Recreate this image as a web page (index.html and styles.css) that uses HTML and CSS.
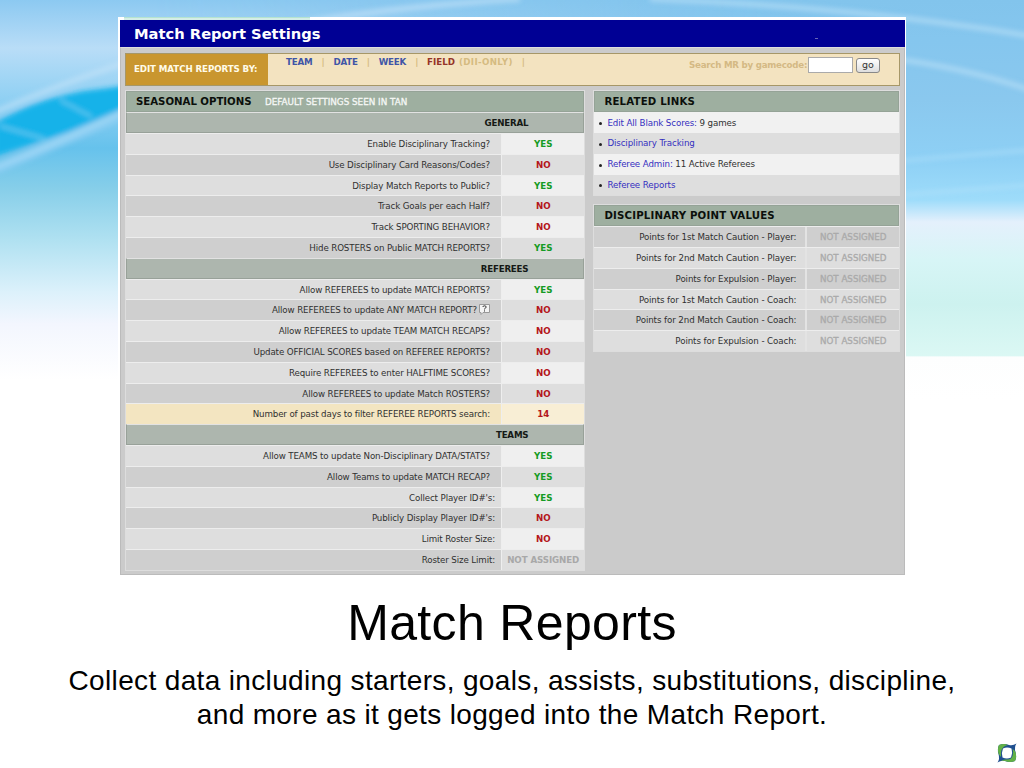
FILE: index.html
```html
<!DOCTYPE html>
<html lang="en">
<head>
<meta charset="utf-8">
<title>Match Reports</title>
<link rel="stylesheet" href="styles.css">
</head>
<body>
<main class="slide">
  <svg class="backdrop" viewBox="0 0 1024 400" preserveAspectRatio="none" aria-hidden="true">
    <defs>
      <linearGradient id="left" x1="0" y1="0" x2="0" y2="1">
        <stop offset="0" stop-color="#8cc9f1"/><stop offset=".12" stop-color="#b9ddf7"/><stop offset=".25" stop-color="#8fd0f3"/><stop offset=".37" stop-color="#66c2ec"/><stop offset=".47" stop-color="#86cee9"/><stop offset=".6" stop-color="#b0e1f1"/><stop offset=".73" stop-color="#dcf1fb"/><stop offset=".81" stop-color="#f3f6fe"/><stop offset=".95" stop-color="#fff"/>
      </linearGradient>
      <linearGradient id="right" x1="0" y1="0" x2="0" y2="1">
        <stop offset="0" stop-color="#82c4ec"/><stop offset=".1" stop-color="#85c6ee"/><stop offset=".25" stop-color="#8ac8ee"/><stop offset=".4" stop-color="#8ed0f5"/><stop offset=".5" stop-color="#9edcfa"/><stop offset=".555" stop-color="#e4f0fc"/><stop offset=".65" stop-color="#d7f5f6"/><stop offset=".76" stop-color="#cdf2ef"/><stop offset=".89" stop-color="#dbf8f4"/><stop offset=".892" stop-color="#fdfefe"/><stop offset="1" stop-color="#fff"/>
      </linearGradient>
      <linearGradient id="fade"><stop offset=".15" stop-color="#000"/><stop offset=".75" stop-color="#fff"/></linearGradient>
      <mask id="blend"><rect width="1024" height="400" fill="url(#fade)"/></mask>
      <filter id="soft"><feGaussianBlur stdDeviation="2.6"/></filter>
    </defs>
    <rect width="1024" height="400" fill="url(#left)"/>
    <rect width="1024" height="400" fill="url(#right)" mask="url(#blend)"/>
    <g filter="url(#soft)" fill="none">
      <path d="M-5 124C20 108 45 100 62 96C90 88 110 90 130 84V112L-5 156Z" fill="#16b2e9"/>
      <path d="M0 126L45 139M60 100L92 117" stroke="#5cc6ef" stroke-width="3"/>
      <path d="M-5 169Q60 142 130 111" stroke="#8acdf2" stroke-width="11"/>
      <path d="M-5 168Q60 142 130 109" stroke="#a8dbf6" stroke-width="2"/>
      <path d="M-5 112Q60 84 130 61Q300 12 520 -1" stroke="#c4e3f9" stroke-width="6" opacity=".6"/>
      <path d="M650 -1Q860 7 1030 36M880 57Q960 66 1030 90" stroke="#c0e2f8" stroke-width="5" opacity=".6"/>
      <path d="M900 161L1030 150M900 195L1030 185" stroke="#b8e5fb" stroke-width="3" opacity=".6"/>
    </g>
  </svg>

  <section class="shot">
    <div class="tabline"></div>
    <header class="titlebar"><span>Match Report Settings</span><i></i></header>
    <div class="work">
      <nav class="filter">
        <strong class="filter-name"><span>EDIT MATCH REPORTS BY:</span></strong>
        <div class="filter-links"><a>TEAM</a><b>|</b><a>DATE</a><b>|</b><a>WEEK</a><b>|</b><a class="current">FIELD</a><em>(DII-ONLY)</em><b>|</b></div>
        <div class="search"><label>Search MR by gamecode:</label><span class="field"></span><span class="go">go</span></div>
      </nav>
      <div class="columns">
        <section class="panel options">
          <h2><span class="h">SEASONAL OPTIONS</span><small>DEFAULT SETTINGS SEEN IN TAN</small></h2>
          <h3>GENERAL</h3>
          <div class="row"><span>Enable Disciplinary Tracking?</span><b class="yes">YES</b></div>
          <div class="row alt"><span>Use Disciplinary Card Reasons/Codes?</span><b class="no">NO</b></div>
          <div class="row"><span>Display Match Reports to Public?</span><b class="yes">YES</b></div>
          <div class="row alt"><span>Track Goals per each Half?</span><b class="no">NO</b></div>
          <div class="row"><span>Track SPORTING BEHAVIOR?</span><b class="no">NO</b></div>
          <div class="row alt"><span>Hide ROSTERS on Public MATCH REPORTS?</span><b class="yes">YES</b></div>
          <h3>REFEREES</h3>
          <div class="row"><span>Allow REFEREES to update MATCH REPORTS?</span><b class="yes">YES</b></div>
          <div class="row alt"><span>Allow REFEREES to update ANY MATCH REPORT?<svg class="help" viewBox="0 0 11 11"><path d="M1 .5H10.5V8.5H4L2 10.5V8.5H.5V.5Z" fill="#f4f4f4" stroke="#999"/><path d="M3.8 3Q4 1.8 5.5 1.8Q7.2 1.8 7.2 3.1Q7.2 3.8 5.5 4.8V5.4M5.5 6.4V7.5" fill="none" stroke="#333"/></svg></span><b class="no">NO</b></div>
          <div class="row"><span>Allow REFEREES to update TEAM MATCH RECAPS?</span><b class="no">NO</b></div>
          <div class="row alt"><span>Update OFFICIAL SCORES based on REFEREE REPORTS?</span><b class="no">NO</b></div>
          <div class="row"><span>Require REFEREES to enter HALFTIME SCORES?</span><b class="no">NO</b></div>
          <div class="row alt"><span>Allow REFEREES to update Match ROSTERS?</span><b class="no">NO</b></div>
          <div class="row tan"><span>Number of past days to filter REFEREE REPORTS search:</span><b class="no">14</b></div>
          <h3>TEAMS</h3>
          <div class="row"><span>Allow TEAMS to update Non-Disciplinary DATA/STATS?</span><b class="yes">YES</b></div>
          <div class="row alt"><span>Allow Teams to update MATCH RECAP?</span><b class="yes">YES</b></div>
          <div class="row wide"><span>Collect Player ID#'s:</span><b class="yes">YES</b></div>
          <div class="row alt wide"><span>Publicly Display Player ID#'s:</span><b class="no">NO</b></div>
          <div class="row wide"><span>Limit Roster Size:</span><b class="no">NO</b></div>
          <div class="row alt wide"><span>Roster Size Limit:</span><b class="unset">NOT ASSIGNED</b></div>
        </section>
        <aside class="side">
          <section class="panel links">
            <h2><span class="h">RELATED LINKS</span></h2>
            <p><i></i><span><a>Edit All Blank Scores:</a> 9 games</span></p>
            <p class="alt"><i></i><a>Disciplinary Tracking</a></p>
            <p><i></i><span><a>Referee Admin:</a> 11 Active Referees</span></p>
            <p class="alt"><i></i><a>Referee Reports</a></p>
          </section>
          <section class="panel points">
            <h2><span class="h">DISCIPLINARY POINT VALUES</span></h2>
            <div class="row alt"><span>Points for 1st Match Caution - Player:</span><b>NOT ASSIGNED</b></div>
            <div class="row"><span>Points for 2nd Match Caution - Player:</span><b>NOT ASSIGNED</b></div>
            <div class="row alt"><span>Points for Expulsion - Player:</span><b>NOT ASSIGNED</b></div>
            <div class="row"><span>Points for 1st Match Caution - Coach:</span><b>NOT ASSIGNED</b></div>
            <div class="row alt"><span>Points for 2nd Match Caution - Coach:</span><b>NOT ASSIGNED</b></div>
            <div class="row"><span>Points for Expulsion - Coach:</span><b>NOT ASSIGNED</b></div>
          </section>
        </aside>
      </div>
    </div>
  </section>

  <h1>Match Reports</h1>
  <p class="caption"><span>Collect data including starters, goals, assists, substitutions, discipline,</span><span>and more as it gets logged into the Match Report.</span></p>
  <svg class="logo" viewBox="0 0 20 20" aria-label="Logo">
    <path d="M2 2Q7 0 12 2Q16 3 19.5 .5Q17 4 18.5 9Q20 14 18 18Q13 20 8 18Q4 17 .5 19.5Q3 16 1.5 11Q0 6 2 2Z" fill="#1f4f8f"/>
    <path d="M2 2Q7 0 11 2Q6 3 4.5 7Q3.5 10 4 14Q3 13 1.7 11Q0 6 2 2Z" fill="#62b146"/>
    <path d="M18 18Q13 20 8 18Q5 17 3 18Q6 16 10 16.5Q14 17 15.5 13Q17 9 15.5 6Q17.5 7 18.5 9Q20 14 18 18Z" fill="#62b146"/>
    <path d="M6 5.500Q10 3.500 14.500 5.500Q16 10 14 14.500Q10 16.500 5.500 14.500Q4 10 6 5.500Z" fill="#fff"/>
  </svg>
</main>
</body>
</html>
```
FILE: styles.css
```css
* { box-sizing: border-box; }
body { margin: 0; background: #fff; }
.slide { position: relative; width: 1024px; height: 768px; overflow: hidden; padding-top: 17px; font-family: "Liberation Sans", Arial, sans-serif; color: #000; }
.backdrop { position: absolute; inset: 0 auto auto 0; width: 1024px; height: 400px; }
.shot { position: relative; width: 788px; height: 559px; margin-left: 118px; padding: 0 1px 1px 2px; background: #fff; font-family: "DejaVu Sans", Verdana, sans-serif; font-size: 8.7px; color: #303030; }
.tabline { height: 3px; margin-left: 4px; width: 186px; border-top: 1px solid #b5e4d0; background: #d4ede7; }
.titlebar { height: 27px; background: #000094; color: #fff; font-size: 14.7px; font-weight: bold; line-height: 28px; padding-left: 14px; display: flex; }
.titlebar span { width: 681px; white-space: nowrap; }
.titlebar i { width: 3px; height: 1px; margin-top: 18px; background: #6666b8; }
.work { height: 528px; background: #cbcbcb; border: 1px solid #bbb; border-top-color: #ddd; padding: 5px 4px 0; }
.filter { height: 33px; width: 775px; display: flex; background: #f3e3c0; border: 1px solid #a69768; font-weight: bold; }
.filter-name { width: 142px; background: #c9962f; color: #fffbe9; font-size: 8.7px; display: flex; align-items: center; padding: 0 0 2px 8px; white-space: nowrap; letter-spacing: -.1px; }
.filter-links { display: flex; width: 406px; padding: 2px 0 0 18px; gap: 9px; line-height: 12px; letter-spacing: -.2px; }
.filter-links a { color: #4055a7; }
.filter-links b, .filter-links em { color: #d5bb81; font-style: normal; }
.filter-links em { letter-spacing: .35px; }
.filter-links .current { color: #953329; margin-right: -5px; letter-spacing: 0; }
.search { display: flex; height: 18px; margin-top: 2px; align-items: center; color: #d4b984; white-space: nowrap; padding-left: 15px; }
.search label { width: 119px; letter-spacing: -.25px; }
.field { width: 45px; height: 16px; border: 1px solid #aaa; background: #fff; }
.go { width: 24px; height: 15px; border: 1px solid #888; border-radius: 3px; background: linear-gradient(#fff, #ddd); margin-left: 3px; color: #333; font-size: 9.5px; font-weight: normal; line-height: 12px; text-align: center; }
.columns { display: flex; gap: 8px; margin-top: 4px; align-items: flex-start; }
.panel { border: 1px solid #ddd; }
.options { width: 461px; }
.side { width: 307px; }
h2, h3, p { margin: 0; font-size: inherit; }
.panel h2 { height: 21.2px; background: #9eafa0; border: 1px solid #95a397; display: flex; align-items: center; padding-left: 9px; color: #0b0f0b; font-size: 10.2px; white-space: nowrap; }
.panel h2 .h { letter-spacing: .18px; }
.options h2 .h { width: 129px; letter-spacing: -.03px; }
.options small { color: #f5f7f5; font-size: 8.8px; font-weight: normal; -webkit-text-stroke: .3px #f5f7f5; }
h3 { height: 20.8px; border: 1px solid #98a199; border-top-color: #e2e2e2; background: #adb6ae; text-align: right; padding-right: 55px; line-height: 20px; color: #151915; letter-spacing: -.2px; }
.row { height: 20.8px; display: grid; grid-template-columns: 375px 1fr; border-top: 1px solid #ededed; background: #dedede; line-height: 20px; white-space: nowrap; }
.row > span { height: 19.8px; text-align: right; padding-right: 11px; letter-spacing: -.13px; }
.row > b { height: 19.8px; border-left: 1px solid #eee; text-align: center; background: #efefef; }
.row.alt { background: #cfcfcf; }
.row.alt > b { background: #dedede; }
.row.tan { background: #f3e5c1; }
.row.tan > b { background: #f8eed5; }
.row.wide > span { padding-right: 6px; }
.row > .yes { color: #159b23; }
.row > .no { color: #b4161b; }
.row > .unset { color: #a8a8a8; letter-spacing: -.1px; }
.help { width: 11px; height: 11px; margin: 0 0 -2px 2px; }
.links { height: 106px; }
.links p { height: 20.8px; display: flex; align-items: center; background: #f1f1f1; white-space: nowrap; letter-spacing: -.11px; }
.links .alt { background: #dedede; }
.links i { width: 3px; height: 3px; border-radius: 50%; background: #222; margin: 2px 5px 0 5px; }
.links a { color: #352fc0; }
.points { margin-top: 8px; }
.points .row { grid-template-columns: 211px 1fr; }
.points .row > span { padding-right: 9px; letter-spacing: -.1px; }
.points .row > b { color: #aaa; background: none; font-weight: normal; border-left: 2px solid #e3e3e3; -webkit-text-stroke: .3px #aaa; }
h1 { margin: 19px 0 0; height: 56px; font-size: 50px; line-height: 56px; font-weight: normal; letter-spacing: .35px; text-align: center; }
.caption { margin: 13px 0 0; display: flex; flex-direction: column; align-items: center; font-size: 28px; letter-spacing: .35px; line-height: 34px; white-space: nowrap; }
.logo { position: absolute; width: 20px; height: 20px; left: 997px; top: 743px; }
```
